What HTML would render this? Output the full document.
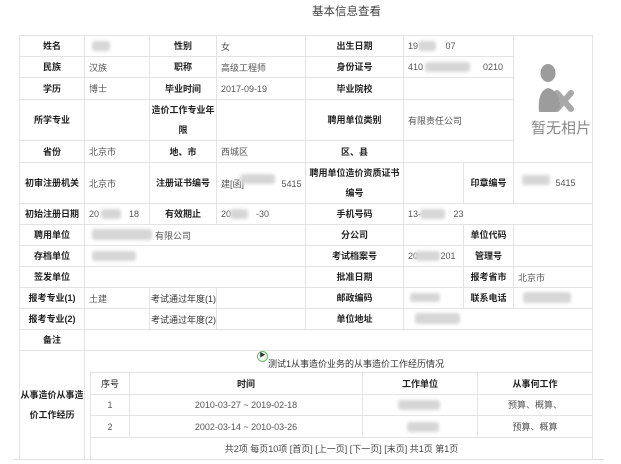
<!DOCTYPE html>
<html><head><meta charset="utf-8"><style>
body{margin:0;width:621px;height:464px;background:#fff;position:relative;overflow:hidden;font-family:"Liberation Sans","Noto Sans CJK SC",sans-serif;}
.c{position:absolute;box-sizing:border-box;border:1px solid #e3e3e3;margin:0 -1px -1px 0;display:flex;align-items:center;font-size:9px;color:#555;padding-left:4px;}
.l{justify-content:center;padding:0;color:#222;font-weight:bold;text-align:center;line-height:20px;}
.b{position:absolute;background:#d6d6d6;border-radius:3px;filter:blur(1.5px);}
.t{position:absolute;font-size:9px;color:#333;}
</style></head><body>
<div class="t" style="left:312px;top:3px;font-size:11.5px;color:#444">基本信息查看</div>
<div style="position:absolute;left:14px;top:459px;width:590px;height:1px;background:#ddd"></div>
<div class="c l" style="left:19px;top:35px;width:66px;height:22px">姓名</div>
<div class="c" style="left:84px;top:35px;width:66px;height:22px"></div>
<div class="c l" style="left:149px;top:35px;width:68px;height:22px">性别</div>
<div class="c" style="left:216px;top:35px;width:90px;height:22px">女</div>
<div class="c l" style="left:305px;top:35px;width:99px;height:22px">出生日期</div>
<div class="c" style="left:403px;top:35px;width:111px;height:22px">19&nbsp;&nbsp;&nbsp;&nbsp;&nbsp;&nbsp;&nbsp;&nbsp;&nbsp;&nbsp;&nbsp;07</div>
<div class="c" style="left:513px;top:35px;width:80px;height:128px;padding:0"></div>
<div class="c l" style="left:19px;top:56px;width:66px;height:22px">民族</div>
<div class="c" style="left:84px;top:56px;width:66px;height:22px">汉族</div>
<div class="c l" style="left:149px;top:56px;width:68px;height:22px">职称</div>
<div class="c" style="left:216px;top:56px;width:90px;height:22px">高级工程师</div>
<div class="c l" style="left:305px;top:56px;width:99px;height:22px">身份证号</div>
<div class="c" style="left:403px;top:56px;width:111px;height:22px">410&nbsp;&nbsp;&nbsp;&nbsp;&nbsp;&nbsp;&nbsp;&nbsp;&nbsp;&nbsp;&nbsp;&nbsp;&nbsp;&nbsp;&nbsp;&nbsp;&nbsp;&nbsp;&nbsp;&nbsp;&nbsp;&nbsp;&nbsp;&nbsp;0210</div>
<div class="c l" style="left:19px;top:77px;width:66px;height:23px">学历</div>
<div class="c" style="left:84px;top:77px;width:66px;height:23px">博士</div>
<div class="c l" style="left:149px;top:77px;width:68px;height:23px">毕业时间</div>
<div class="c" style="left:216px;top:77px;width:90px;height:23px">2017-09-19</div>
<div class="c l" style="left:305px;top:77px;width:99px;height:23px">毕业院校</div>
<div class="c" style="left:403px;top:77px;width:111px;height:23px"></div>
<div class="c l" style="left:19px;top:99px;width:66px;height:42px">所学专业</div>
<div class="c" style="left:84px;top:99px;width:66px;height:42px"></div>
<div class="c l" style="left:149px;top:99px;width:68px;height:42px;white-space:nowrap"><span>造价工作专业年<br>限</span></div>
<div class="c" style="left:216px;top:99px;width:90px;height:42px"></div>
<div class="c l" style="left:305px;top:99px;width:99px;height:42px">聘用单位类别</div>
<div class="c" style="left:403px;top:99px;width:111px;height:42px">有限责任公司</div>
<div class="c l" style="left:19px;top:140px;width:66px;height:23px">省份</div>
<div class="c" style="left:84px;top:140px;width:66px;height:23px">北京市</div>
<div class="c l" style="left:149px;top:140px;width:68px;height:23px">地、市</div>
<div class="c" style="left:216px;top:140px;width:90px;height:23px">西城区</div>
<div class="c l" style="left:305px;top:140px;width:99px;height:23px">区、县</div>
<div class="c" style="left:403px;top:140px;width:111px;height:23px"></div>
<div class="c l" style="left:19px;top:162px;width:66px;height:42px">初审注册机关</div>
<div class="c" style="left:84px;top:162px;width:66px;height:42px">北京市</div>
<div class="c l" style="left:149px;top:162px;width:68px;height:42px">注册证书编号</div>
<div class="c" style="left:216px;top:162px;width:90px;height:42px">建[函]&nbsp;&nbsp;&nbsp;&nbsp;&nbsp;&nbsp;&nbsp;&nbsp;&nbsp;&nbsp;&nbsp;&nbsp;&nbsp;&nbsp;&nbsp;5415</div>
<div class="c l" style="left:305px;top:162px;width:99px;height:42px">聘用单位造价资质证书编号</div>
<div class="c" style="left:403px;top:162px;width:61px;height:42px"></div>
<div class="c l" style="left:463px;top:162px;width:51px;height:42px">印章编号</div>
<div class="c" style="left:513px;top:162px;width:80px;height:42px">&nbsp;&nbsp;&nbsp;&nbsp;&nbsp;&nbsp;&nbsp;&nbsp;&nbsp;&nbsp;&nbsp;&nbsp;&nbsp;&nbsp;&nbsp;5415</div>
<div class="c l" style="left:19px;top:203px;width:66px;height:22px">初始注册日期</div>
<div class="c" style="left:84px;top:203px;width:66px;height:22px">20&nbsp;&nbsp;&nbsp;&nbsp;&nbsp;&nbsp;&nbsp;&nbsp;&nbsp;&nbsp;&nbsp;&nbsp;18</div>
<div class="c l" style="left:149px;top:203px;width:68px;height:22px">有效期止</div>
<div class="c" style="left:216px;top:203px;width:90px;height:22px">20&nbsp;&nbsp;&nbsp;&nbsp;&nbsp;&nbsp;&nbsp;&nbsp;&nbsp;&nbsp;-30</div>
<div class="c l" style="left:305px;top:203px;width:99px;height:22px">手机号码</div>
<div class="c" style="left:403px;top:203px;width:190px;height:22px">13-&nbsp;&nbsp;&nbsp;&nbsp;&nbsp;&nbsp;&nbsp;&nbsp;&nbsp;&nbsp;&nbsp;&nbsp;&nbsp;23</div>
<div class="c l" style="left:19px;top:224px;width:66px;height:22px">聘用单位</div>
<div class="c" style="left:84px;top:224px;width:222px;height:22px;padding-left:70px">有限公司</div>
<div class="c l" style="left:305px;top:224px;width:99px;height:22px">分公司</div>
<div class="c" style="left:403px;top:224px;width:61px;height:22px"></div>
<div class="c l" style="left:463px;top:224px;width:51px;height:22px">单位代码</div>
<div class="c" style="left:513px;top:224px;width:80px;height:22px"></div>
<div class="c l" style="left:19px;top:245px;width:66px;height:22px">存档单位</div>
<div class="c" style="left:84px;top:245px;width:222px;height:22px"></div>
<div class="c l" style="left:305px;top:245px;width:99px;height:22px">考试档案号</div>
<div class="c" style="left:403px;top:245px;width:61px;height:22px">20&nbsp;&nbsp;&nbsp;&nbsp;&nbsp;&nbsp;&nbsp;&nbsp;&nbsp;201</div>
<div class="c l" style="left:463px;top:245px;width:51px;height:22px">管理号</div>
<div class="c" style="left:513px;top:245px;width:80px;height:22px"></div>
<div class="c l" style="left:19px;top:266px;width:66px;height:22px">签发单位</div>
<div class="c" style="left:84px;top:266px;width:222px;height:22px"></div>
<div class="c l" style="left:305px;top:266px;width:99px;height:22px">批准日期</div>
<div class="c" style="left:403px;top:266px;width:61px;height:22px"></div>
<div class="c l" style="left:463px;top:266px;width:51px;height:22px">报考省市</div>
<div class="c" style="left:513px;top:266px;width:80px;height:22px">北京市</div>
<div class="c l" style="left:19px;top:287px;width:66px;height:22px">报考专业(1)</div>
<div class="c" style="left:84px;top:287px;width:66px;height:22px">土建</div>
<div class="c" style="left:149px;top:287px;width:68px;height:22px;padding-left:1px;color:#333;white-space:nowrap">考试通过年度(1)</div>
<div class="c" style="left:216px;top:287px;width:90px;height:22px"></div>
<div class="c l" style="left:305px;top:287px;width:99px;height:22px">邮政编码</div>
<div class="c" style="left:403px;top:287px;width:61px;height:22px"></div>
<div class="c l" style="left:463px;top:287px;width:51px;height:22px">联系电话</div>
<div class="c" style="left:513px;top:287px;width:80px;height:22px"></div>
<div class="c l" style="left:19px;top:308px;width:66px;height:22px">报考专业(2)</div>
<div class="c" style="left:84px;top:308px;width:66px;height:22px"></div>
<div class="c" style="left:149px;top:308px;width:68px;height:22px;padding-left:1px;color:#333;white-space:nowrap">考试通过年度(2)</div>
<div class="c" style="left:216px;top:308px;width:90px;height:22px"></div>
<div class="c l" style="left:305px;top:308px;width:99px;height:22px">单位地址</div>
<div class="c" style="left:403px;top:308px;width:190px;height:22px"></div>
<div class="c l" style="left:19px;top:329px;width:66px;height:22px">备注</div>
<div class="c" style="left:84px;top:329px;width:509px;height:22px"></div>
<div class="c l" style="left:19px;top:350px;width:66px;height:110px;white-space:nowrap"><span>从事造价从事造<br>价工作经历</span></div>
<div class="c" style="left:84px;top:350px;width:509px;height:110px"></div>
<div style="position:absolute;left:257px;top:351px;width:9px;height:9px;border-radius:50%;border:1px solid #6b6;background:#efe;font-size:6px;line-height:9px;text-align:center;color:#333">▶</div>
<div class="t" style="left:268px;top:357px">测试1从事造价业务的从事造价工作经历情况</div>
<div class="c l" style="left:90px;top:372px;width:40px;height:23px;font-weight:normal">序号</div>
<div class="c l" style="left:129px;top:372px;width:234px;height:23px">时间</div>
<div class="c l" style="left:362px;top:372px;width:116px;height:23px">工作单位</div>
<div class="c l" style="left:477px;top:372px;width:116px;height:23px">从事何工作</div>
<div class="c l" style="left:90px;top:394px;width:40px;height:22px;font-weight:normal;color:#555">1</div>
<div class="c l" style="left:129px;top:394px;width:234px;height:22px;font-weight:normal;color:#555">2010-03-27 ~ 2019-02-18</div>
<div class="c" style="left:362px;top:394px;width:116px;height:22px"></div>
<div class="c l" style="left:477px;top:394px;width:116px;height:22px;font-weight:normal;color:#555">预算、概算、</div>
<div class="c l" style="left:90px;top:415px;width:40px;height:23px;font-weight:normal;color:#555">2</div>
<div class="c l" style="left:129px;top:415px;width:234px;height:23px;font-weight:normal;color:#555">2002-03-14 ~ 2010-03-26</div>
<div class="c" style="left:362px;top:415px;width:116px;height:23px"></div>
<div class="c l" style="left:477px;top:415px;width:116px;height:23px;font-weight:normal;color:#555">预算、概算</div>
<div class="c l" style="left:90px;top:437px;width:503px;height:23px;font-weight:normal;color:#444">共2项 每页10项 [首页] [上一页] [下一页] [末页] 共1页 第1页</div>
<div class="b" style="left:92px;top:41px;width:18px;height:10px"></div>
<div class="b" style="left:418px;top:41px;width:18px;height:10px"></div>
<div class="b" style="left:425px;top:62px;width:45px;height:10px"></div>
<div class="b" style="left:240px;top:174px;width:35px;height:10px"></div>
<div class="b" style="left:522px;top:175px;width:28px;height:10px"></div>
<div class="b" style="left:101px;top:209px;width:20px;height:10px"></div>
<div class="b" style="left:230px;top:209px;width:18px;height:10px"></div>
<div class="b" style="left:420px;top:209px;width:25px;height:10px"></div>
<div class="b" style="left:92px;top:229px;width:60px;height:11px"></div>
<div class="b" style="left:92px;top:251px;width:44px;height:10px"></div>
<div class="b" style="left:415px;top:251px;width:25px;height:10px"></div>
<div class="b" style="left:410px;top:293px;width:30px;height:9px"></div>
<div class="b" style="left:523px;top:292px;width:48px;height:11px"></div>
<div class="b" style="left:415px;top:313px;width:45px;height:11px"></div>
<div class="b" style="left:398px;top:400px;width:42px;height:10px"></div>
<div class="b" style="left:407px;top:422px;width:32px;height:10px"></div>
<svg style="position:absolute;left:530px;top:55px" width="50" height="60" viewBox="0 0 50 60">
<path d="M27 38 L41 54 M41 38 L27 54" stroke="#a8a8a8" stroke-width="6" stroke-linecap="round"/>
<ellipse cx="18" cy="18" rx="7.5" ry="9" fill="#9c9c9c"/>
<path d="M9 57 C8 45 10 35 18 33 C26 35 30 42 30 50 C30 55 27 57 25 57 Z" fill="#9c9c9c"/>
</svg>
<div class="t" style="left:531px;top:117px;font-size:15px;color:#8a8a8a">暂无相片</div>
</body></html>
